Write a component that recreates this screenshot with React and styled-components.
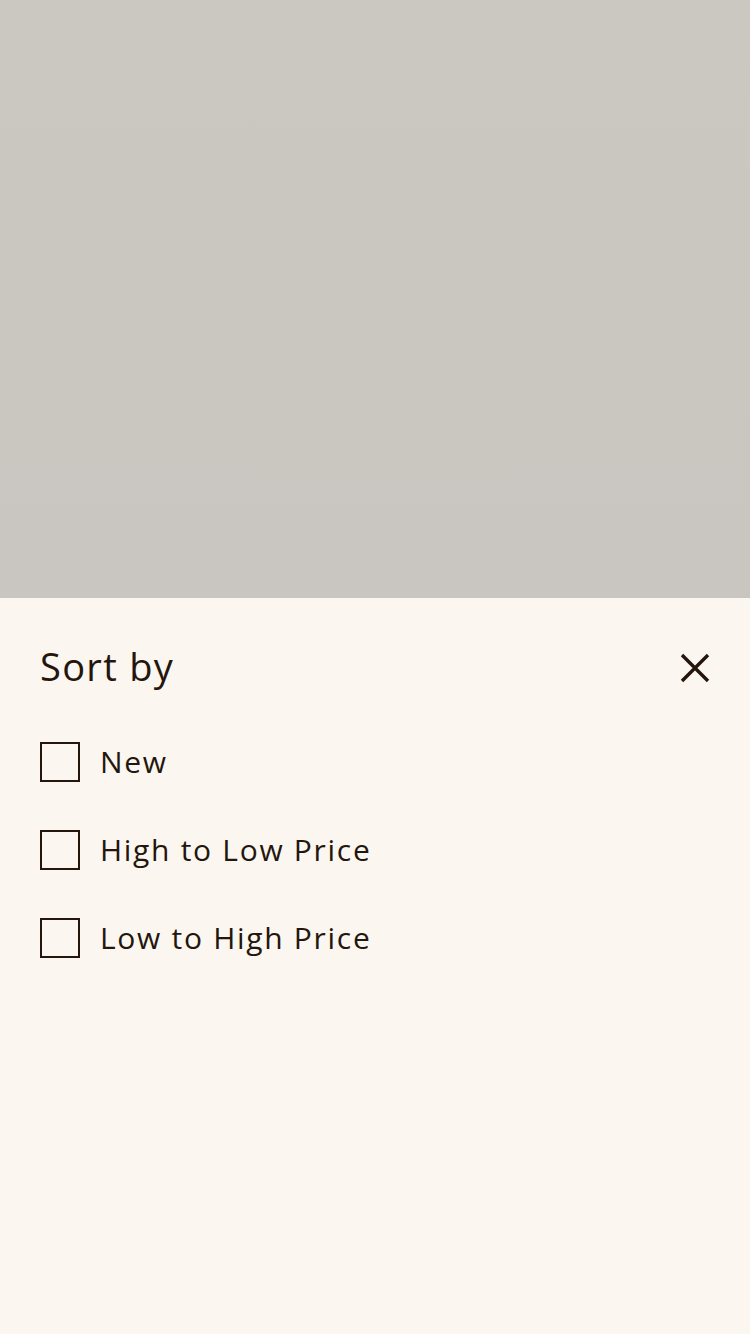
import styled, { createGlobalStyle } from "styled-components";

const GlobalStyle = createGlobalStyle`
  html, body {
    margin: 0;
    padding: 0;
    height: 100%;
  }
  body {
    font-family: "Open Sans", "Liberation Sans", sans-serif;
    background: #fbf6f0;
  }
  #root {
    height: 100%;
  }
`;

const Page = styled.div`
  height: 1334px;
  display: flex;
  flex-direction: column;
`;

const Backdrop = styled.div`
  height: 598px;
  flex-shrink: 0;
  background: linear-gradient(#cbc8c1, #c9c6c1);
`;

const Sheet = styled.div`
  flex: 1;
  background: #fbf6f0;
  color: #24160c;
  padding: 42px 40px 0 40px;
`;

const Header = styled.div`
  display: flex;
  align-items: center;
  justify-content: space-between;
`;

const Title = styled.h2`
  margin: 0;
  font-size: 38px;
  font-weight: 400;
  letter-spacing: 1.3px;
  line-height: 52px;
`;

const CloseButton = styled.button`
  border: none;
  background: none;
  padding: 0;
  margin-top: 4px;
  width: 30px;
  height: 30px;
  color: #24160c;
  cursor: pointer;
  display: flex;
`;

const Options = styled.div`
  display: flex;
  flex-direction: column;
  gap: 48px;
  margin-top: 50px;
`;

const Option = styled.label`
  display: flex;
  align-items: center;
  gap: 20px;
  cursor: pointer;
`;

const Box = styled.span`
  width: 40px;
  height: 40px;
  box-sizing: border-box;
  border: 2px solid #24160c;
  flex-shrink: 0;
`;

const Label = styled.span`
  font-size: 30px;
  letter-spacing: 1.7px;
  line-height: 40px;
`;

const options = ["New", "High to Low Price", "Low to High Price"];

const App = () => {
  return (
    <Page>
      <GlobalStyle />
      <Backdrop />
      <Sheet>
        <Header>
          <Title>Sort by</Title>
          <CloseButton aria-label="close">
            <svg width="30" height="30" viewBox="0 0 30 30">
              <path
                d="M2 2 L28 28 M28 2 L2 28"
                stroke="currentColor"
                strokeWidth="3.4"
                fill="none"
              />
            </svg>
          </CloseButton>
        </Header>
        <Options>
          {options.map((o) => (
            <Option key={o}>
              <Box />
              <Label>{o}</Label>
            </Option>
          ))}
        </Options>
      </Sheet>
    </Page>
  );
};

export default App;
